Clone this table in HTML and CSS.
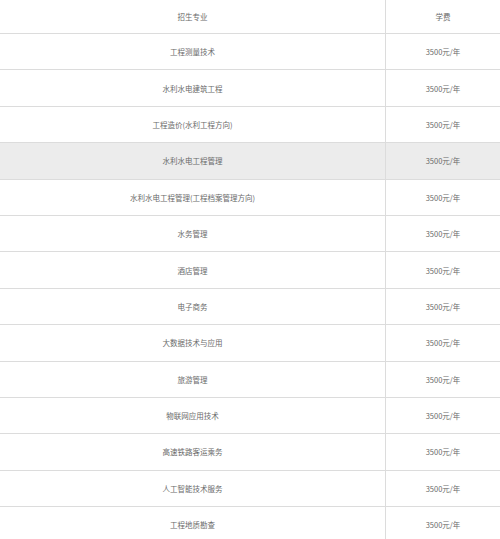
FILE: index.html
```html
<!DOCTYPE html>
<html lang="zh">
<head>
<meta charset="utf-8">
<link rel="stylesheet" href="styles.css">
</head>
<body>
<div class="table">
  <div class="row head"><div class="cell major">招生专业</div><div class="cell fee">学费</div></div>
  <div class="row"><div class="cell major">工程测量技术</div><div class="cell fee">3500元/年</div></div>
  <div class="row"><div class="cell major">水利水电建筑工程</div><div class="cell fee">3500元/年</div></div>
  <div class="row"><div class="cell major">工程造价(水利工程方向)</div><div class="cell fee">3500元/年</div></div>
  <div class="row hl"><div class="cell major">水利水电工程管理</div><div class="cell fee">3500元/年</div></div>
  <div class="row"><div class="cell major">水利水电工程管理(工程档案管理方向)</div><div class="cell fee">3500元/年</div></div>
  <div class="row"><div class="cell major">水务管理</div><div class="cell fee">3500元/年</div></div>
  <div class="row"><div class="cell major">酒店管理</div><div class="cell fee">3500元/年</div></div>
  <div class="row"><div class="cell major">电子商务</div><div class="cell fee">3500元/年</div></div>
  <div class="row"><div class="cell major">大数据技术与应用</div><div class="cell fee">3500元/年</div></div>
  <div class="row"><div class="cell major">旅游管理</div><div class="cell fee">3500元/年</div></div>
  <div class="row"><div class="cell major">物联网应用技术</div><div class="cell fee">3500元/年</div></div>
  <div class="row"><div class="cell major">高速铁路客运乘务</div><div class="cell fee">3500元/年</div></div>
  <div class="row"><div class="cell major">人工智能技术服务</div><div class="cell fee">3500元/年</div></div>
  <div class="row"><div class="cell major">工程地质勘查</div><div class="cell fee">3500元/年</div></div>
</div>
</body>
</html>
```
FILE: styles.css
```css
html, body {
  margin: 0;
  padding: 0;
  background: #ffffff;
}
body {
  width: 500px;
  height: 539px;
  overflow: hidden;
  font-family: "Noto Sans CJK SC", "Noto Sans", sans-serif;
  font-size: 7.5px;
  color: #6a6a6a;
}
.table {
  display: flex;
  flex-direction: column;
}
.row {
  display: grid;
  grid-template-columns: 386px 1fr;
  height: 36.4px;
  box-sizing: border-box;
  border-bottom: 1px solid #dcdcdc;
  flex: none;
}
.row.head {
  height: 34px;
}
.row.hl {
  background: #ececec;
}
.cell {
  display: flex;
  align-items: center;
  justify-content: center;
}
.major {
  border-right: 1px solid #dcdcdc;
}
```
